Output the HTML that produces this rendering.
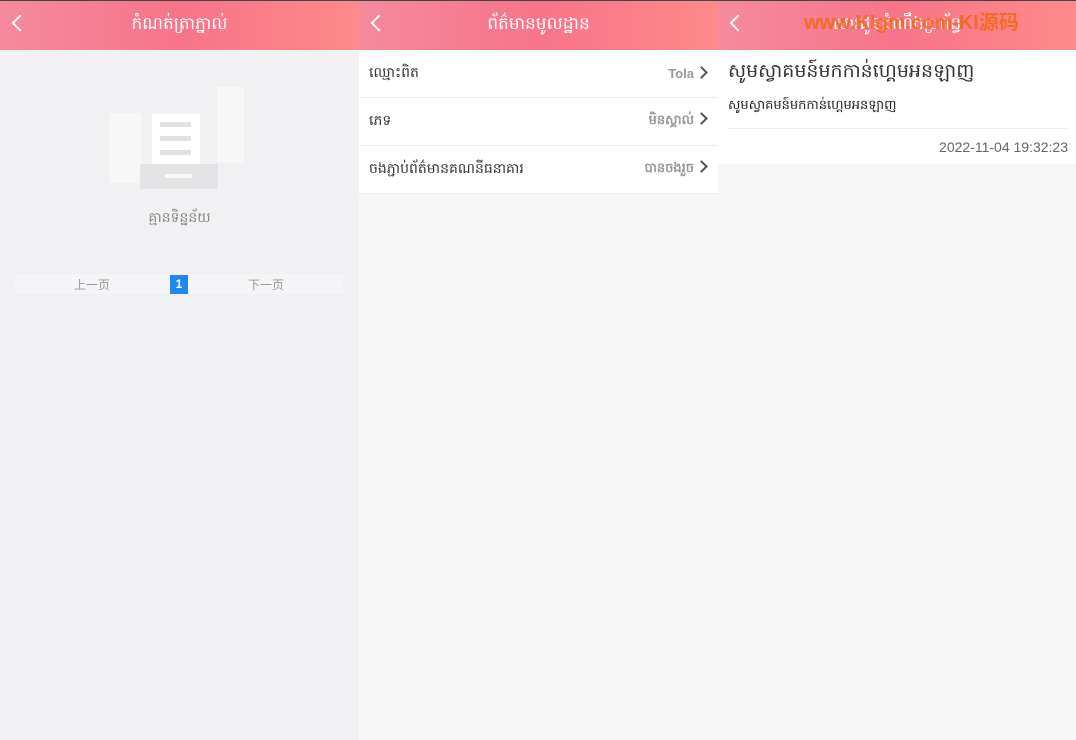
<!DOCTYPE html>
<html><head><meta charset="utf-8"><style>
*{margin:0;padding:0;box-sizing:border-box}
body{width:1076px;height:740px;overflow:hidden;font-family:"Liberation Sans","Noto Sans CJK SC",sans-serif;background:#f5f5f5;position:relative}
.p{position:absolute;top:0;height:740px}
.hd{height:50px;border-top:1px solid #444;background:linear-gradient(90deg,#f58a9c,#f77489 50%,#fe8a8b);color:#fff;text-align:center;font-size:17px;line-height:46px;position:relative}
.bk{position:absolute;width:12px;height:12px;border-left:2.5px solid #fff;border-bottom:2.5px solid #fff;transform:rotate(45deg);left:14px;top:16px}
.row{height:48px;background:#fff;border-bottom:1px solid #eee;display:flex;justify-content:space-between;align-items:center;padding:0 12px 0 10px;font-size:14px;color:#333}
.row span{color:#999;font-weight:bold;font-size:13px}
.row span:after{content:"";display:inline-block;width:7px;height:7px;border-right:2px solid #555;border-top:2px solid #555;transform:rotate(45deg);margin-left:3px;vertical-align:1px}
</style></head><body>
<div class="p" style="left:0;width:359px;background:#f1f1f3">
<div class="hd"><div class="bk"></div>កំណត់ត្រាភ្នាល់</div>
<div style="position:absolute;left:110px;top:80px;width:140px;height:115px">
 <div style="position:absolute;left:0;top:33px;width:32px;height:70px;background:#f7f7f8"></div>
 <div style="position:absolute;left:107px;top:7px;width:27px;height:75px;background:#f7f7f8"></div>
 <div style="position:absolute;left:42px;top:34px;width:48px;height:52px;background:#fff"></div>
 <div style="position:absolute;left:50px;top:42px;width:31px;height:5px;background:#e2e2e4"></div>
 <div style="position:absolute;left:50px;top:56px;width:31px;height:5px;background:#e2e2e4"></div>
 <div style="position:absolute;left:50px;top:70px;width:31px;height:5px;background:#e2e2e4"></div>
 <div style="position:absolute;left:30px;top:84px;width:78px;height:25px;background:#e4e4e6"></div>
 <div style="position:absolute;left:55px;top:94px;width:27px;height:4px;background:#fafafa"></div>
</div>
<div style="position:absolute;top:208px;width:100%;text-align:center;color:#888;font-size:14px">គ្មានទិន្នន័យ</div>
<div style="position:absolute;left:15px;top:274px;width:328px;height:20px;background:#f5f5f7;font-size:12px;color:#999;line-height:22px">
 <span style="position:absolute;left:59px">上一页</span>
 <span style="position:absolute;left:155px;top:1px;width:18px;height:19px;background:#1e88f0;color:#fff;text-align:center;line-height:19px;font-weight:bold">1</span>
 <span style="position:absolute;left:233px">下一页</span>
</div>
</div>
<div class="p" style="left:359px;width:359px;background:#f7f7f7">
<div class="hd"><div class="bk"></div>ព័ត៌មានមូលដ្ឋាន</div>
<div class="row">ឈ្មោះពិត<span>Tola</span></div>
<div class="row">ភេទ<span>មិនស្គាល់</span></div>
<div class="row">ចងភ្ជាប់ព័ត៌មានគណនីធនាគារ<span>បានចងរួច</span></div>
</div>
<div class="p" style="left:718px;width:358px;background:#f7f7f7">
<div class="hd"><div class="bk"></div>សារជូនដំណឹងប្រព័ន្ធ
<div style="position:absolute;left:86px;top:0;color:#f26a1b;font-weight:bold;font-size:20px;line-height:44px;opacity:.9">www.KIgm.com-KI源码</div></div>
<div style="background:#fff;height:114px;padding:0 8px 0 10px">
 <div style="font-size:19px;color:#333;padding-top:9px;height:44px">សូមស្វាគមន៍មកកាន់ហ្គេមអនឡាញ</div>
 <div style="font-size:13px;color:#222;height:35px;border-bottom:1px solid #eee;padding-top:3px">សូមស្វាគមន៍មកកាន់ហ្គេមអនឡាញ</div>
 <div style="text-align:right;font-size:14px;color:#666;padding-top:10px">2022-11-04 19:32:23</div>
</div>
</div>
</body></html>
